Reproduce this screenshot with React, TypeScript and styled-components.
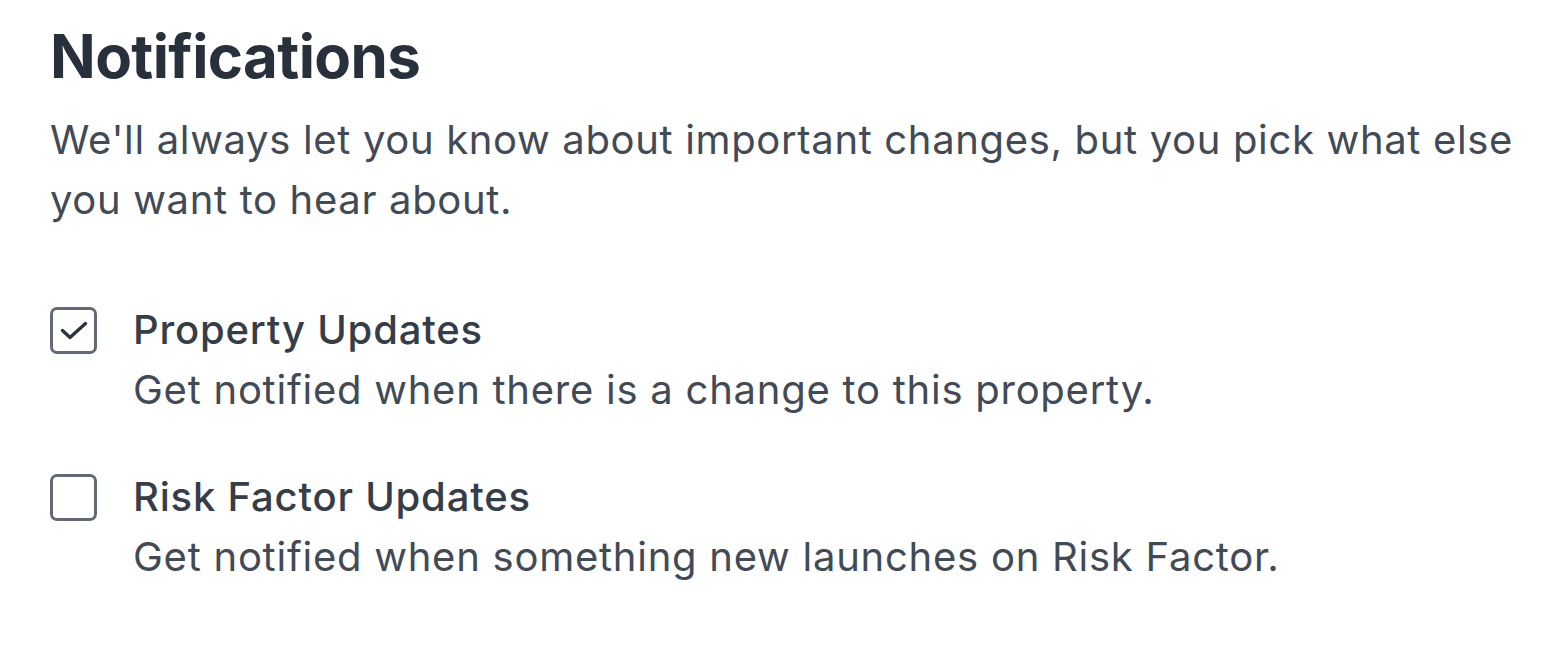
import styled, { createGlobalStyle } from 'styled-components';

type Pref = {
	id: string;
	title: string;
	description: string;
	checked: boolean;
};

const prefs: Pref[] = [
	{
		id: 'property',
		title: 'Property Updates',
		description: 'Get notified when there is a change to this property.',
		checked: true,
	},
	{
		id: 'risk-factor',
		title: 'Risk Factor Updates',
		description: 'Get notified when something new launches on Risk Factor.',
		checked: false,
	},
];

const GlobalStyle = createGlobalStyle`
	body {
		margin: 0;
		background: #ffffff;
		font-family: Inter, 'Noto Sans', sans-serif;
	}
`;

const CheckIcon = (): JSX.Element => (
	<svg width="28" height="19" viewBox="0 0 28 19" fill="none" stroke="currentColor" strokeWidth="3.4" strokeLinecap="round" strokeLinejoin="round">
		<path d="M2.5 9.5l7.5 7L25.5 2.5" />
	</svg>
);

const App = (): JSX.Element => {
	return (
		<>
			<GlobalStyle />
			<Section>
				<Title>Notifications</Title>
				<Intro>We&apos;ll always let you know about important changes, but you pick what else you want to hear about.</Intro>
				<List>
					{prefs.map(
						(pref: Pref): JSX.Element => (
							<Option key={pref.id}>
								<BoxCell>
									<Box checked={pref.checked}>{pref.checked && <CheckIcon />}</Box>
								</BoxCell>
								<div>
									<OptionTitle>{pref.title}</OptionTitle>
									<OptionText>{pref.description}</OptionText>
								</div>
							</Option>
						),
					)}
				</List>
			</Section>
		</>
	);
};

const Section = styled.section`
	padding: 20px 0 0 50px;
	color: #414a55;
	width: 1548px;
	box-sizing: border-box;
`;

const Title = styled.h1`
	margin: 0;
	font-size: 60px;
	line-height: 72px;
	font-weight: 700;
	color: #27303b;
	letter-spacing: -0.6px;
`;

const Intro = styled.p`
	margin: 18px 0 0;
	font-size: 40px;
	line-height: 60px;
	font-weight: 400;
	letter-spacing: 0.66px;
	max-width: 1475px;
`;

const List = styled.div`
	display: flex;
	flex-direction: column;
	gap: 47px;
	margin-top: 70px;
`;

const Option = styled.label`
	display: flex;
	gap: 36px;
`;

const BoxCell = styled.div`
	height: 60px;
	display: flex;
	align-items: center;
`;

const Box = styled.span<{ checked: boolean }>`
	width: 47px;
	height: 47px;
	box-sizing: border-box;
	border: 3px solid #616a75;
	border-radius: 7px;
	display: flex;
	align-items: center;
	justify-content: center;
	color: #2b333d;
`;

const OptionTitle = styled.div`
	font-size: 40px;
	line-height: 60px;
	font-weight: 500;
	color: #353d48;
	letter-spacing: 0.8px;
`;

const OptionText = styled.div`
	font-size: 40px;
	line-height: 60px;
	font-weight: 400;
	letter-spacing: 0.75px;
`;

export default App;
